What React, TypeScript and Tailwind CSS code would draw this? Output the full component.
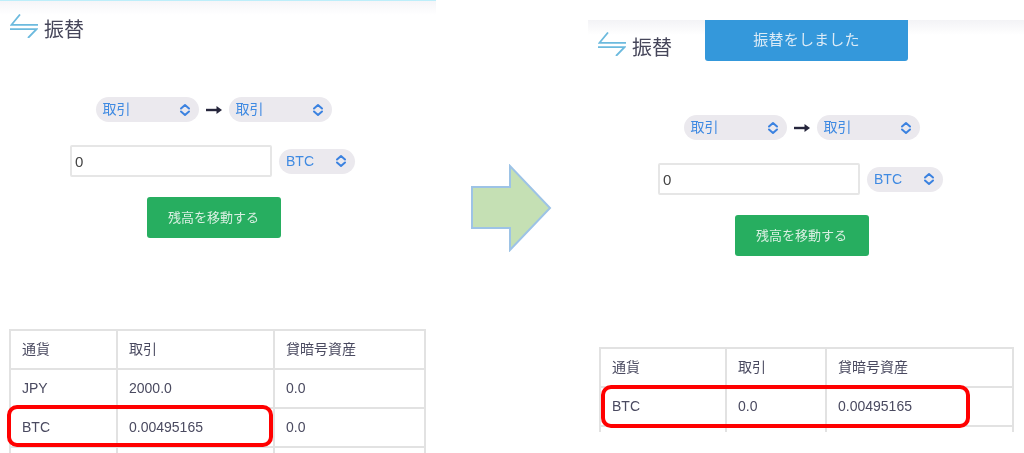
interface PanelProps {
  rows: string[][];
  cols: number[];
  tableLeft: number;
  topLine?: boolean;
  height: string;
  toast?: boolean;
  highlight: string;
}

const headers = ['通貨', '取引', '貸暗号資産'];

function Chevrons() {
  return (
    <svg width="12" height="14" viewBox="0 0 12 14" fill="none" stroke="#3b82e0" strokeWidth="2" strokeLinecap="round" strokeLinejoin="round">
      <path d="M2 5.5 6 2l4 3.5" />
      <path d="M2 8.5 6 12l4-3.5" />
    </svg>
  );
}

function Pill({ label, className }: { label: string; className: string }) {
  return (
    <div className={`flex h-[25px] items-center justify-between rounded-full bg-[#ebe9ee] pl-[7px] pr-[8px] text-[14px] text-[#3f8ae2] ${className}`}>
      <span>{label}</span>
      <Chevrons />
    </div>
  );
}

function TransferIcon() {
  return (
    <svg width="28" height="24" viewBox="0 0 28 24" fill="none" stroke="#6cbade" strokeWidth="1.8">
      <path d="M10 .5 1.5 10.8H28" />
      <path d="M0 15.2h26.5L18 24" />
    </svg>
  );
}

function Panel({ rows, cols, tableLeft, topLine, height, toast, highlight }: PanelProps) {
  return (
    <div className={`relative w-[436px] shrink-0 overflow-hidden ${height}`}>
      {topLine ? (
        <div className="absolute inset-x-0 top-0 h-[15px] border-t border-[#bdeefa] bg-gradient-to-b from-[#f5f5f8] to-white" />
      ) : (
        <div className="absolute inset-x-0 top-[2px] h-[15px] bg-gradient-to-b from-[#f3f3f6] to-white" />
      )}

      <div className="relative flex items-start gap-[6px] pl-[10px] pt-[14px]">
        <TransferIcon />
        <span className="mt-[4px] text-[20px] leading-[24px] text-[#46465a]">振替</span>
      </div>

      {toast && (
        <div className="absolute left-[117px] top-[2px] flex h-[41px] w-[203px] items-center justify-center rounded-b-[3px] bg-[#3498db] text-[15px] tracking-[0.2px] text-[#dcebf6]">
          振替をしました
        </div>
      )}

      <div className="relative flex w-[427px] flex-col items-center">
        <div className="mt-[55px] flex items-center">
          <Pill label="取引" className="w-[103px]" />
          <svg className="mx-[6px]" width="18" height="10" viewBox="0 0 18 10" fill="#26263c">
            <rect x="1" y="3.8" width="12" height="2.4" />
            <path d="M11.5 1 17 5l-5.5 4z" />
          </svg>
          <Pill label="取引" className="w-[103px]" />
        </div>

        <div className="mr-[2px] mt-[23px] flex items-center gap-[7px]">
          <input
            readOnly
            value="0"
            className="h-[32px] w-[202px] rounded-[2px] border-2 border-[#e6e6e6] bg-white px-[3px] text-[15px] text-[#444] outline-none"
          />
          <Pill label="BTC" className="w-[76px]" />
        </div>

        <button className="mt-[20px] h-[41px] w-[134px] rounded-[3px] bg-[#27ae60] text-[13px] text-[#d8efe1]">
          残高を移動する
        </button>
      </div>

      <table
        className="relative mt-[91px] table-fixed border-collapse text-[14px] text-[#4a4a60]"
        style={{ marginLeft: tableLeft, width: cols[0] + cols[1] + cols[2] }}
      >
        <colgroup>
          {cols.map((w, i) => (
            <col key={i} style={{ width: w }} />
          ))}
        </colgroup>
        <tbody>
          <tr className="h-[39px]">
            {headers.map((h) => (
              <td key={h} className="border-2 border-[#e2e2e2] pl-[11px]">{h}</td>
            ))}
          </tr>
          {rows.map((row, i) => (
            <tr key={i} className="h-[39px]">
              {row.map((cell, j) => (
                <td key={j} className="border-2 border-[#e2e2e2] pl-[11px]">{cell}</td>
              ))}
            </tr>
          ))}
        </tbody>
      </table>

      <div className={`absolute rounded-[10px] border-[4px] border-[#ff0000] ${highlight}`} />
    </div>
  );
}

export default function App() {
  return (
    <div className="flex h-[453px] w-[1024px] overflow-hidden bg-white blur-[0.4px] [font-family:'Liberation_Sans','Noto_Sans_CJK_JP',sans-serif]">
      <Panel
        topLine
        height="h-[453px]"
        tableLeft={9}
        cols={[107, 157, 151]}
        highlight="left-[7px] top-[405px] h-[42px] w-[266px]"
        rows={[
          ['JPY', '2000.0', '0.0'],
          ['BTC', '0.00495165', '0.0'],
          ['', '', ''],
        ]}
      />

      <div className="w-[152px] shrink-0 pl-[34px] pt-[164px]">
        <svg width="82" height="88" viewBox="0 0 82 88">
          <path d="M2 23h38V2l40 42-40 42V64H2z" fill="#c5e0b4" stroke="#9dc3e6" strokeWidth="2" />
        </svg>
      </div>

      <div className="mt-[18px]">
        <Panel
          toast
          height="h-[414px]"
          tableLeft={11}
          cols={[126, 100, 187]}
          highlight="left-[13px] top-[367px] h-[43px] w-[369px]"
          rows={[
            ['BTC', '0.0', '0.00495165'],
            ['', '', ''],
          ]}
        />
      </div>
    </div>
  );
}
